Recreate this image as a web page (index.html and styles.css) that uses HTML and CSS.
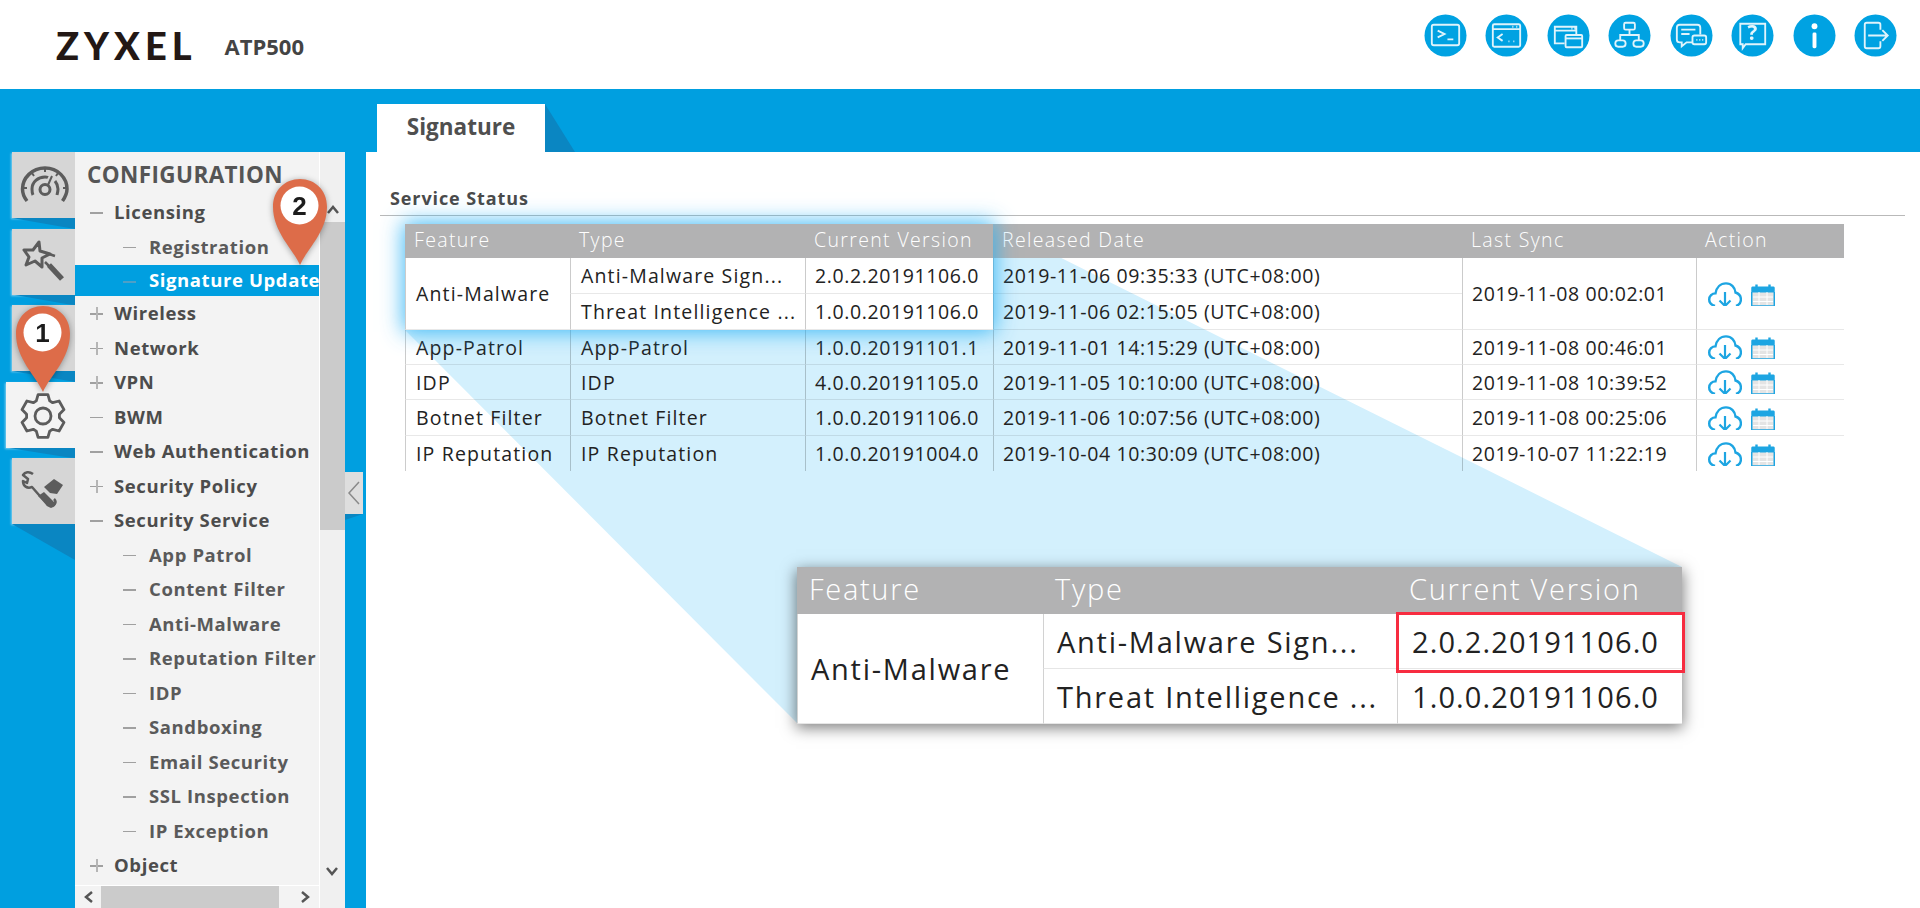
FILE: index.html
```html
<!DOCTYPE html>
<html lang="en">
<head>
<meta charset="utf-8">
<title>Zyxel ATP500 - Signature</title>
<link rel="stylesheet" href="styles.css">
</head>
<body>
<svg class="defs" width="0" height="0" aria-hidden="true">
  <symbol id="cloud" viewBox="0 0 34 24">
    <path d="M7 24C3.500 23 1.200 20.500 1.200 17.500C1.200 14 4 11.400 7.500 11.400C8.500 5.500 12.500 1.400 18 1.400C23.500 1.400 27 5.500 27.500 10.500C30.800 11.500 32.900 14.200 32.900 17.500C32.900 20.500 31 23 28 24" fill="none" stroke="#1da5e2" stroke-width="2.400"/>
    <path d="M17 10V24M11.500 18.500L17 24L22.500 18.500" fill="none" stroke="#1da5e2" stroke-width="2.200"/>
  </symbol>
  <symbol id="cal" viewBox="0 0 24 22">
    <rect x="1" y="4" width="22" height="18" fill="#e4e4e4" stroke="#2aa8e2"/>
    <rect x="0.500" y="2.500" width="23" height="6" rx="1" fill="#1da5e2"/>
    <path d="M5.500 0.500V4M18.500 0.500V4" stroke="#1da5e2" stroke-width="2.400"/>
    <path d="M8 8V21M16 8V21M2 13H22M2 17.500H22" stroke="#fff" stroke-width="1"/>
    <path d="M0.500 8V22H23.500V8" fill="none" stroke="#1da5e2"/>
  </symbol>
</svg>

<header class="top">
  <div class="brand">
    <span class="logo">ZYXEL</span>
    <span class="model">ATP500</span>
  </div>
  <div class="tools">
    <svg class="tool" viewBox="0 0 44 44"><circle class="disc" cx="22" cy="22" r="21.500"/><g class="ln"><rect x="8" y="11" width="28" height="21" rx="2"/><path d="M14 17L21 20.500L14 24M24 26H30"/></g></svg>
    <svg class="tool" viewBox="0 0 44 44"><circle class="disc" cx="22" cy="22" r="21.500"/><g class="ln"><rect x="8" y="10.500" width="28" height="23" rx="1.500"/><path d="M8 15.500H36M18 20.500L13 24L18 27.500M24 28H25M29 28H30M28 13H29M32 13H33"/></g></svg>
    <svg class="tool" viewBox="0 0 44 44"><circle class="disc" cx="22" cy="22" r="21.500"/><g class="ln"><path d="M18 30H8V13H30V21M8 17H30M25 15H26M28 15H29"/><rect x="19" y="21.500" width="17" height="12.500" rx="1"/><path d="M19 25H36"/></g></svg>
    <svg class="tool" viewBox="0 0 44 44"><circle class="disc" cx="22" cy="22" r="21.500"/><g class="ln"><rect x="16.500" y="9" width="11" height="7" rx="1.500"/><path d="M22 16V21M12.500 27V21.500H31.500V27"/><rect x="7.500" y="27" width="10.500" height="6.500" rx="3"/><rect x="26" y="27" width="10.500" height="6.500" rx="3"/></g></svg>
    <svg class="tool" viewBox="0 0 44 44"><circle class="disc" cx="22" cy="22" r="21.500"/><g class="ln"><path d="M23 29H17L12 33V29H10Q7 29 7 26V14Q7 11 10 11H28Q31 11 31 14V21"/><path d="M11.500 16H26M11.500 20.500H20"/><rect x="23" y="22" width="14" height="9" rx="2"/><path d="M27 26.500H28M30 26.500H31M33 26.500H34"/></g></svg>
    <svg class="tool" viewBox="0 0 44 44"><circle class="disc" cx="22" cy="22" r="21.500"/><g class="ln"><path d="M21 31H15L12 35V31H9.500V10H35V31H21"/></g><text class="q" x="22" y="27" text-anchor="middle">?</text></svg>
    <svg class="tool" viewBox="0 0 44 44"><circle class="disc" cx="22" cy="22" r="21.500"/><circle cx="22" cy="12.500" r="3" fill="#fff"/><rect x="20" y="19" width="4" height="16" rx="1.500" fill="#fff"/></svg>
    <svg class="tool" viewBox="0 0 44 44"><circle class="disc" cx="22" cy="22" r="21.500"/><g class="ln"><path d="M27 16V11Q27 9 25 9H13Q11 9 11 11V33Q11 35 13 35H25Q27 35 27 33V28"/><path d="M14.500 22H34.500M29 16.500L34.500 22L29 27.500"/></g></svg>
  </div>
</header>

<div class="tabbar">
  <div class="tab">Signature</div>
  <div class="tabfold"></div>
</div>

<main class="workspace">
  <nav class="rail">
    <div class="tile">
      <svg class="ico" viewBox="0 0 63 66"><g class="g"><path d="M15 49C11 44 10.500 40 10.500 37C10.500 26 20 16 33 16C46 16 55 26 55 37C55 40 54 44 50.500 49" stroke-width="3.500"/><path d="M21 43C20 41 20 39 20 37C20 30 26 25 33 25C34 25 35 25 36 25.500M43 29C45 31.500 46 34 46 37C46 39 45.500 41 45 43" stroke-width="3"/><circle cx="33" cy="37.500" r="5" stroke-width="3"/><path d="M36 33L40 24M33 16V20M20 21L22 24M46 21L44 24M11 36H15M51 36H55" stroke-width="2"/></g></svg>
    </div>
    <div class="tile">
      <svg class="ico" viewBox="0 0 63 66"><g class="g"><path d="M27 13L28 22L38 25L30 29V38L23 32L14 36L17 28L12 21L21 21Z" stroke-width="3" stroke-linejoin="round"/><path d="M33 33L38 38M37 25L43 27" stroke-width="2.500"/><path d="M37 36L50 50" stroke-width="5.500"/></g></svg>
    </div>
    <div class="tile">
      <svg class="ico" viewBox="0 0 63 66"><g class="g"><rect x="13" y="15" width="37" height="26" rx="2" stroke-width="3"/><path d="M31 41V50M21 50H42" stroke-width="3"/></g></svg>
    </div>
    <div class="tile active">
      <svg class="ico" viewBox="0 0 69 66"><g transform="translate(37 34)" class="g"><path d="M-6.700 -15.100L-4.900 -21.400L4.900 -21.400L6.700 -15.100L9.700 -13.300L16.100 -15L21 -6.400L16.400 -1.700L16.400 1.700L21 6.400L16.100 15L9.700 13.300L6.700 15.100L4.900 21.400L-4.900 21.400L-6.700 15.100L-9.700 13.300L-16.100 15L-21 6.400L-16.400 1.700L-16.400 -1.700L-21 -6.400L-16.100 -15L-9.700 -13.300Z" stroke-width="2.800" stroke-linejoin="round"/><circle r="8" stroke-width="2.800"/></g></svg>
    </div>
    <div class="tile last">
      <svg class="ico" viewBox="0 0 63 66"><g class="g"><path d="M21 16C17 13 13 14 11 17L16 21L15 25L11 23C11 28 15 31 20 29L34 45C36 49 40 49 42 47C44 45 44 43 42 41" stroke-width="2.500" stroke-linejoin="round"/></g><path d="M32 29L42 21L51 27L45 36L38 35Z" class="s"/><path d="M26 38L32 34L44 46L39 50Z" class="s"/></svg>
    </div>
  </nav>

  <aside class="panel">
    <div class="panel-main">
      <div class="panel-view">
        <h2 class="panel-title">CONFIGURATION</h2>
        <ul class="tree">
          <li class="node minus">Licensing</li>
          <li class="node sub minus">Registration</li>
          <li class="node sub minus selected"><span>Signature Update</span></li>
          <li class="node plus">Wireless</li>
          <li class="node plus">Network</li>
          <li class="node plus">VPN</li>
          <li class="node minus">BWM</li>
          <li class="node minus">Web Authentication</li>
          <li class="node plus">Security Policy</li>
          <li class="node minus">Security Service</li>
          <li class="node sub minus">App Patrol</li>
          <li class="node sub minus">Content Filter</li>
          <li class="node sub minus">Anti-Malware</li>
          <li class="node sub minus">Reputation Filter</li>
          <li class="node sub minus">IDP</li>
          <li class="node sub minus">Sandboxing</li>
          <li class="node sub minus">Email Security</li>
          <li class="node sub minus">SSL Inspection</li>
          <li class="node sub minus">IP Exception</li>
          <li class="node plus">Object</li>
        </ul>
      </div>
      <div class="hscroll">
        <svg class="arrow" viewBox="0 0 12 12"><path d="M9 1L3 6L9 11"/></svg>
        <div class="hthumb"></div>
        <svg class="arrow" viewBox="0 0 12 12"><path d="M3 1L9 6L3 11"/></svg>
      </div>
    </div>
    <div class="vscroll">
      <svg class="arrow up" viewBox="0 0 12 12"><path d="M1 9L6 3L11 9"/></svg>
      <div class="vthumb"></div>
      <svg class="arrow down" viewBox="0 0 12 12"><path d="M1 3L6 9L11 3"/></svg>
    </div>
  </aside>

  <div class="gutter">
    <div class="handle">
      <svg class="handle-ico" viewBox="0 0 18 26"><path d="M14 2L4 13L14 24"/></svg>
    </div>
  </div>

  <section class="content">
    <svg class="beam" viewBox="0 0 1554 756"><polygon points="39,72 39,178 431,571 1316,571 1316,415 627,72"/></svg>
    <h3 class="section-title">Service Status</h3>
    <table class="grid">
      <colgroup><col class="c1"><col class="c2"><col class="c3"><col class="c4"><col class="c5"><col class="c6"></colgroup>
      <thead>
        <tr><th>Feature</th><th>Type</th><th>Current Version</th><th>Released Date</th><th>Last Sync</th><th>Action</th></tr>
      </thead>
      <tbody>
        <tr>
          <td rowspan="2" class="white word">Anti-Malware</td><td class="white word">Anti-Malware Sign...</td><td class="white">2.0.2.20191106.0</td><td>2019-11-06 09:35:33 (UTC+08:00)</td>
          <td rowspan="2">2019-11-08 00:02:01</td>
          <td rowspan="2"><div class="acts"><svg class="i-cloud"><use href="#cloud"/></svg><svg class="i-cal"><use href="#cal"/></svg></div></td>
        </tr>
        <tr><td class="white word">Threat Intelligence ...</td><td class="white">1.0.0.20191106.0</td><td>2019-11-06 02:15:05 (UTC+08:00)</td></tr>
        <tr><td class="word">App-Patrol</td><td class="word">App-Patrol</td><td>1.0.0.20191101.1</td><td>2019-11-01 14:15:29 (UTC+08:00)</td><td>2019-11-08 00:46:01</td><td><div class="acts"><svg class="i-cloud"><use href="#cloud"/></svg><svg class="i-cal"><use href="#cal"/></svg></div></td></tr>
        <tr><td class="word">IDP</td><td class="word">IDP</td><td>4.0.0.20191105.0</td><td>2019-11-05 10:10:00 (UTC+08:00)</td><td>2019-11-08 10:39:52</td><td><div class="acts"><svg class="i-cloud"><use href="#cloud"/></svg><svg class="i-cal"><use href="#cal"/></svg></div></td></tr>
        <tr><td class="word">Botnet Filter</td><td class="word">Botnet Filter</td><td>1.0.0.20191106.0</td><td>2019-11-06 10:07:56 (UTC+08:00)</td><td>2019-11-08 00:25:06</td><td><div class="acts"><svg class="i-cloud"><use href="#cloud"/></svg><svg class="i-cal"><use href="#cal"/></svg></div></td></tr>
        <tr><td class="word">IP Reputation</td><td class="word">IP Reputation</td><td>1.0.0.20191004.0</td><td>2019-10-04 10:30:09 (UTC+08:00)</td><td>2019-10-07 11:22:19</td><td><div class="acts"><svg class="i-cloud"><use href="#cloud"/></svg><svg class="i-cal"><use href="#cal"/></svg></div></td></tr>
      </tbody>
    </table>
    <div class="glow"></div>

    <div class="inset">
      <table class="inset-grid">
        <colgroup><col class="ic1"><col class="ic2"><col class="ic3"></colgroup>
        <thead><tr><th>Feature</th><th>Type</th><th>Current Version</th></tr></thead>
        <tbody>
          <tr><td rowspan="2" class="word">Anti-Malware</td><td class="word">Anti-Malware Sign...</td><td>2.0.2.20191106.0</td></tr>
          <tr><td class="word">Threat Intelligence ...</td><td>1.0.0.20191106.0</td></tr>
        </tbody>
      </table>
      <div class="redbox"></div>
    </div>
  </section>
</main>

<svg class="pin pin-one" viewBox="0 0 56 88"><path d="M28 87C21 71 1 54 1 29C1 12 13 1 28 1C43 1 55 12 55 29C55 54 35 71 28 87Z"/><circle cx="27.500" cy="27.500" r="19"/><text x="27.500" y="36.500" text-anchor="middle">1</text></svg>
<svg class="pin pin-two" viewBox="0 0 56 88"><path d="M28 87C21 71 1 54 1 29C1 12 13 1 28 1C43 1 55 12 55 29C55 54 35 71 28 87Z"/><circle cx="27.500" cy="27.500" r="19"/><text x="27.500" y="36.500" text-anchor="middle">2</text></svg>
</body>
</html>
```
FILE: styles.css
```css
* { box-sizing: border-box; }
html, body { margin: 0; padding: 0; }
body {
  width: 1920px;
  height: 908px;
  overflow: hidden;
  background: #009fe0;
  font-family: "Open Sans", "Liberation Sans", sans-serif;
  position: relative;
}
.defs { position: absolute; }

/* header */
.top {
  height: 89px;
  background: #fff;
  display: flex;
  justify-content: space-between;
  align-items: center;
  padding: 0 23px 0 56px;
}
.brand { display: flex; align-items: center; gap: 28px; }
.logo {
  font-family: "Lato", "Liberation Sans", sans-serif;
  font-size: 38px;
  font-weight: 900;
  letter-spacing: 5px;
  color: #231815;
  line-height: 1;
}
.model { font-size: 22px; font-weight: 700; color: #444; margin-top: 2px; }
.tools { display: flex; gap: 18.500px; margin-top: -19px; }
.tool { width: 43px; height: 43px; display: block; }
.disc { fill: #00a2e2; }
.ln { fill: none; stroke: #fff; stroke-width: 1.900; opacity: .88; }
.q { fill: #fff; font-size: 21px; font-weight: 700; opacity: .9; }

/* tabs */
.tabbar { height: 63px; padding: 15px 0 0 377px; display: flex; }
.tab {
  width: 168px;
  height: 48px;
  background: #fff;
  color: #4f4f4f;
  font-size: 22.500px;
  font-weight: 700;
  text-align: center;
  line-height: 46px;
}
.tabfold {
  width: 30px;
  height: 48px;
  background: #0a86c2;
  clip-path: polygon(0 0, 100% 100%, 0 100%);
}

.workspace { display: flex; height: 756px; }

/* rail */
.rail { width: 75px; padding-left: 12px; flex: none; }
.tile {
  width: 63px;
  height: 66px;
  margin-bottom: 10.500px;
  background: #d6d6d6;
  position: relative;
  box-shadow: -1px 1px 2px rgba(255, 255, 255, .5);
}
.tile::after {
  content: "";
  position: absolute;
  left: 0;
  top: 66px;
  width: 63px;
  height: 11px;
  background: #0a86c2;
  clip-path: polygon(0 0, 100% 0, 100% 100%);
}
.tile.active {
  width: 69px;
  margin-left: -6px;
  background: #f3f3f3;
}
.tile.active::after { width: 69px; }
.tile.last::after { height: 36px; }
.ico { width: 100%; height: 100%; display: block; }
.g { fill: none; stroke: #5c5c5c; }
.s { fill: #5c5c5c; }

/* panel */
.panel { width: 270px; flex: none; display: flex; background: #f3f3f3; }
.panel-main { width: 245px; display: flex; flex-direction: column; border-right: 1px solid #fff; }
.panel-view { height: 733px; overflow: hidden; }
.panel-title {
  margin: 0;
  padding: 8px 0 0 12px;
  height: 43px;
  font-size: 22.500px;
  letter-spacing: .4px;
  line-height: 29px;
  font-weight: 700;
  color: #555;
  white-space: nowrap;
}
.tree { list-style: none; margin: 0; padding: 0; }
.node {
  height: 34.500px;
  line-height: 33px;
  padding-left: 39px;
  font-size: 18.500px;
  font-weight: 700;
  letter-spacing: .6px;
  color: #4c4c4c;
  position: relative;
  white-space: nowrap;
}
.node.sub { padding-left: 74px; color: #5a5a5a; }
.node::before {
  content: "";
  position: absolute;
  left: 15px;
  top: 17px;
  width: 13px;
  height: 1.500px;
  background: #a0a0a0;
}
.node.sub::before { left: 48px; }
.node.plus::after {
  content: "";
  position: absolute;
  left: 21px;
  top: 11px;
  width: 1.500px;
  height: 13px;
  background: #b5b5b5;
}
.node.selected {
  height: 31px;
  margin-top: 1px;
  line-height: 30px;
  color: #fff;
  overflow: hidden;
  background: #009fe0;
}
.node.selected::before { background: #4f9fc6; top: 16px; }

.hscroll {
  height: 23px;
  border-top: 1px solid #fff;
  display: flex;
  align-items: center;
  padding: 0 8px;
  position: relative;
}
.hthumb { width: 178px; height: 23px; background: #cbcbcb; margin: 0 auto 0 6px; }
.arrow { width: 12px; height: 12px; fill: none; stroke: #555; stroke-width: 2.500; flex: none; }

.vscroll {
  width: 25px;
  background: #f0f0f0;
  display: flex;
  flex-direction: column;
  align-items: center;
  padding-top: 52px;
  position: relative;
}
.vthumb { width: 25px; height: 308px; background: #cbcbcb; margin-top: 6px; }
.arrow.down { position: absolute; top: 713px; left: 6px; }

/* gutter */
.gutter { width: 21px; flex: none; position: relative; }
.handle {
  position: absolute;
  left: 0;
  top: 320px;
  width: 18px;
  height: 42px;
  background: #dedede;
  display: flex;
  align-items: center;
  justify-content: center;
}
.handle::after {
  content: "";
  position: absolute;
  left: 0;
  top: 42px;
  width: 18px;
  height: 6px;
  background: #0a86c2;
  clip-path: polygon(0 100%, 100% 0, 0 0);
}
.handle-ico { width: 18px; height: 26px; fill: none; stroke: #8a8a8a; stroke-width: 1.500; }

/* content */
.content { flex: 1; background: #fff; position: relative; overflow: hidden; }
.beam { position: absolute; left: 0; top: 0; width: 1554px; height: 756px; }
.beam polygon { fill: #d3f0fd; }
.section-title {
  position: relative;
  margin: 0 15px 8px 14px;
  height: 64px;
  padding: 34px 0 0 10px;
  font-size: 18px;
  letter-spacing: .9px;
  line-height: 24px;
  font-weight: 700;
  color: #4a4a4a;
  border-bottom: 1px solid #b9b9b9;
}
.grid {
  position: relative;
  margin-left: 39px;
  border-collapse: separate;
  border-spacing: 0;
  table-layout: fixed;
  width: 1439px;
  font-size: 19.500px;
  letter-spacing: .6px;
  color: #222;
}
.c1 { width: 165px; }
.c2 { width: 235px; }
.c3 { width: 188px; }
.c4 { width: 469px; }
.c5 { width: 234px; }
.c6 { width: 148px; }
.grid th {
  height: 34px;
  background: #b2b2b3;
  color: #fff;
  font-weight: 300;
  letter-spacing: 1.350px;
  text-align: left;
  padding: 0 0 3px 9px;
}
.grid td {
  height: 35px;
  padding: 0 0 0 9px;
  border-left: 1px solid rgba(0, 0, 0, .2);
  border-bottom: 1px solid rgba(0, 0, 0, .09);
  white-space: nowrap;
  overflow: hidden;
}
.grid td.word { letter-spacing: 1.150px; padding-left: 10px; }
.grid tbody tr:nth-child(1) td, .grid tbody tr:nth-child(2) td { height: 36px; }
.grid tbody tr:nth-child(5) td { height: 36px; }
.grid tbody tr:last-child td { border-bottom: 0; }
.grid td.white { background: #fff; }
.acts { display: flex; gap: 9px; align-items: flex-end; margin-left: 2px; }
.i-cloud { width: 34px; height: 24px; display: block; }
.i-cal { width: 24px; height: 22px; display: block; }

.glow {
  position: absolute;
  left: 39px;
  top: 72px;
  width: 588px;
  height: 106px;
  box-shadow: 0 0 20px 2px rgba(38, 176, 245, .85);
  pointer-events: none;
}

.inset {
  position: absolute;
  left: 431px;
  top: 415px;
  width: 885px;
  height: 156px;
  background: #fff;
  box-shadow: 0 4px 14px 1px rgba(0, 0, 0, .5);
}
.inset-grid {
  border-collapse: separate;
  border-spacing: 0;
  table-layout: fixed;
  width: 885px;
  font-size: 29px;
  letter-spacing: 1.100px;
  color: #222;
}
.ic1 { width: 246px; }
.ic2 { width: 354px; }
.ic3 { width: 285px; }
.inset-grid th {
  height: 47px;
  background: #b2b2b3;
  color: #fff;
  font-weight: 300;
  letter-spacing: 1.700px;
  text-align: left;
  padding: 0 0 5px 12px;
}
.inset-grid td {
  height: 55px;
  padding: 0 0 0 14px;
  border-left: 1px solid #d2d2d2;
  border-bottom: 1px solid #e6e6e6;
  white-space: nowrap;
}
.inset-grid td.word { letter-spacing: 1.750px; padding-left: 13px; }
.redbox {
  position: absolute;
  left: 599px;
  top: 45px;
  width: 289px;
  height: 61px;
  border: 3px solid #f72c40;
}

/* pins */
.pin { position: absolute; width: 56px; height: 88px; filter: drop-shadow(0 1px 3px rgba(0, 0, 0, .35)); }
.pin path { fill: #dd6c49; }
.pin circle { fill: #fff; }
.pin text { font-family: "Liberation Sans", sans-serif; font-size: 26px; font-weight: 700; fill: #1c1c1c; }
.pin-one { left: 15px; top: 305px; }
.pin-two { left: 272px; top: 178px; }
```
